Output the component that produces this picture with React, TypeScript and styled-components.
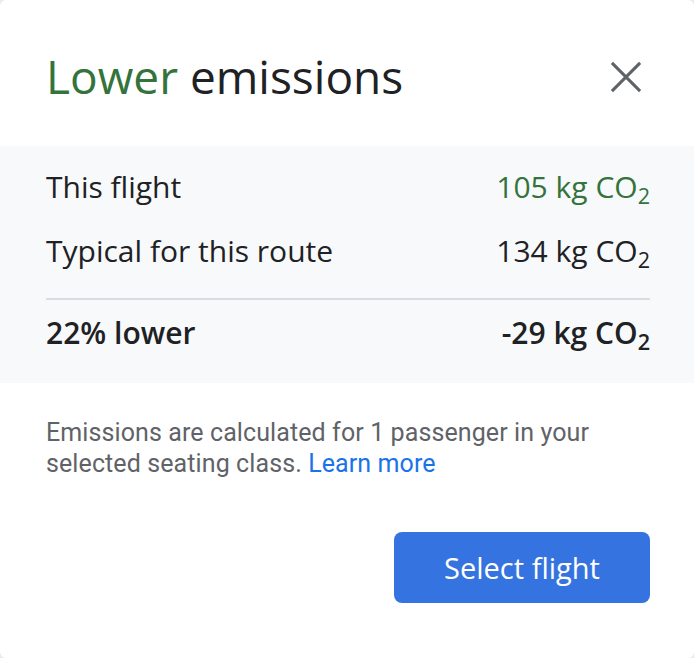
import styled, { createGlobalStyle } from 'styled-components';

const GlobalStyle = createGlobalStyle`
  html, body {
    margin: 0;
    padding: 0;
    background: #e8eaed;
  }
  #root {
    height: 658px;
  }
`;

const rows = [
  { label: 'This flight', value: '105', green: true },
  { label: 'Typical for this route', value: '134' },
];

const App = () => {
  return (
    <>
      <GlobalStyle />
      <Card>
        <Header>
          <Title>
            <Green>Lower</Green> emissions
          </Title>
          <CloseButton aria-label="Close">
            <svg width="52" height="52" viewBox="0 0 24 24">
              <path
                d="M5.5 5.5 L18.5 18.5 M18.5 5.5 L5.5 18.5"
                stroke="#5f6368"
                strokeWidth="1.4"
                fill="none"
              />
            </svg>
          </CloseButton>
        </Header>

        <Panel>
          {rows.map((row) => (
            <Row key={row.label}>
              <span>{row.label}</span>
              <Value green={row.green}>
                {row.value} kg CO<sub>2</sub>
              </Value>
            </Row>
          ))}
          <Divider />
          <Row bold>
            <span>22% lower</span>
            <Value>
              -29 kg CO<sub>2</sub>
            </Value>
          </Row>
        </Panel>

        <Note>
          Emissions are calculated for 1 passenger in your selected seating class.{' '}
          <LearnMore href="#">Learn more</LearnMore>
        </Note>

        <Footer>
          <SelectButton>Select flight</SelectButton>
        </Footer>
      </Card>
    </>
  );
};

const Card = styled.div`
  box-sizing: border-box;
  width: 694px;
  height: 658px;
  background: #fff;
  border-radius: 6px;
  display: flex;
  flex-direction: column;
  font-family: 'Open Sans', 'Noto Sans', sans-serif;
  color: #202124;
`;

const Header = styled.div`
  display: flex;
  align-items: center;
  justify-content: space-between;
  height: 146px;
  padding: 6px 40px 0 46px;
  box-sizing: border-box;
`;

const Title = styled.h1`
  margin: 0;
  font-size: 46px;
  font-weight: 400;
  color: #202124;
`;

const Green = styled.span`
  color: #34733b;
`;

const CloseButton = styled.button`
  display: flex;
  align-items: center;
  justify-content: center;
  width: 56px;
  height: 56px;
  border: none;
  background: none;
  padding: 0;
  margin-top: 2px;
  cursor: pointer;
`;

const Panel = styled.div`
  background: #f8f9fa;
  padding: 8px 44px 19px 46px;
  display: flex;
  flex-direction: column;
`;

const Row = styled.div<{ bold?: boolean }>`
  display: flex;
  justify-content: space-between;
  align-items: center;
  height: 64px;
  font-size: 30px;
  font-weight: ${(p) => (p.bold ? 600 : 400)};

  sub {
    font-size: 0.72em;
    vertical-align: -0.3em;
    line-height: 0;
  }
`;

const Value = styled.span<{ green?: boolean }>`
  color: ${(p) => (p.green ? '#34733b' : '#202124')};
`;

const Divider = styled.div`
  height: 2px;
  background: #dadce0;
  margin: 16px 0 0;
`;

const Note = styled.p`
  margin: 34px 50px 0 46px;
  font-family: Roboto, 'Liberation Sans', sans-serif;
  font-size: 25px;
  line-height: 31px;
  letter-spacing: 0.1px;
  color: #5f6368;
`;

const LearnMore = styled.a`
  color: #1a73e8;
  text-decoration: none;
`;

const Footer = styled.div`
  display: flex;
  justify-content: flex-end;
  padding: 53px 44px 0;
`;

const SelectButton = styled.button`
  width: 256px;
  height: 71px;
  border: none;
  border-radius: 8px;
  background: #3574e0;
  color: #fff;
  font-family: 'Open Sans', 'Noto Sans', sans-serif;
  font-size: 29px;
  font-weight: 500;
  cursor: pointer;
`;

export default App;
